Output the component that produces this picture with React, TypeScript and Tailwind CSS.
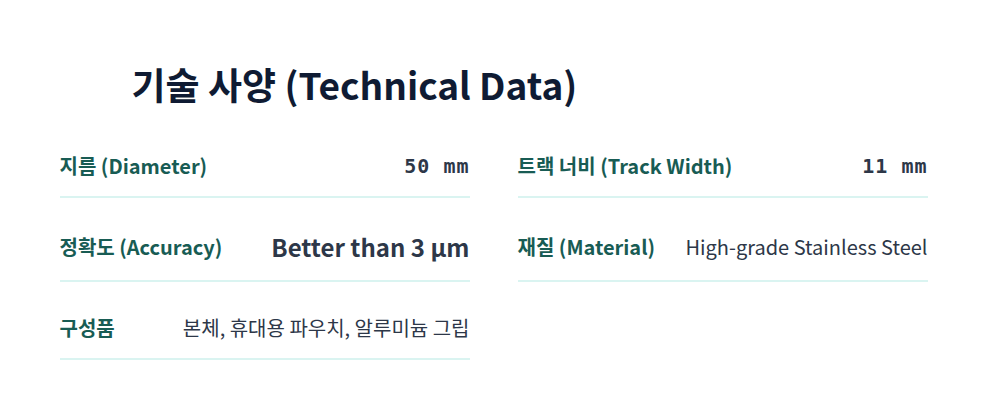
const specs = [
  { label: '지름 (Diameter)', value: '50 mm', kind: 'mono' },
  { label: '트랙 너비 (Track Width)', value: '11 mm', kind: 'mono' },
  { label: '정확도 (Accuracy)', value: 'Better than 3 µm', kind: 'big' },
  { label: '재질 (Material)', value: 'High-grade Stainless Steel', kind: 'text' },
  { label: '구성품', value: '본체, 휴대용 파우치, 알루미늄 그립', kind: 'text' },
];

function Value({ value, kind }: { value: string; kind: string }) {
  if (kind === 'mono') {
    return (
      <span className="font-['DejaVu_Sans_Mono',monospace] text-[20px] font-bold tracking-[1px] text-[#2d3748]">
        {value}
      </span>
    );
  }
  if (kind === 'big') {
    return <span className="text-[24px] leading-[36px] font-semibold text-[#2d3748]">{value}</span>;
  }
  return <span className="text-[20px] text-[#2d3748]">{value}</span>;
}

export default function App() {
  return (
    <div className="min-h-[415px] bg-white font-['Noto_Sans_CJK_KR','Noto_Sans',sans-serif]">
      <div className="mx-auto w-[868px] pt-[56px]">
        <h2 className="ml-[72px] text-[37px] font-bold leading-[56px] text-[#0f1b33]">
          기술 사양 (Technical Data)
        </h2>

        <div className="mt-[24px] grid grid-cols-2 gap-x-12 gap-y-4">
          {specs.map((s) => (
            <div
              key={s.label}
              className="flex items-center justify-between border-b-2 border-[#daf4f1] py-[15px]"
            >
              <span className="text-[20px] font-bold text-[#185c54]">{s.label}</span>
              <Value value={s.value} kind={s.kind} />
            </div>
          ))}
        </div>
      </div>
    </div>
  );
}
